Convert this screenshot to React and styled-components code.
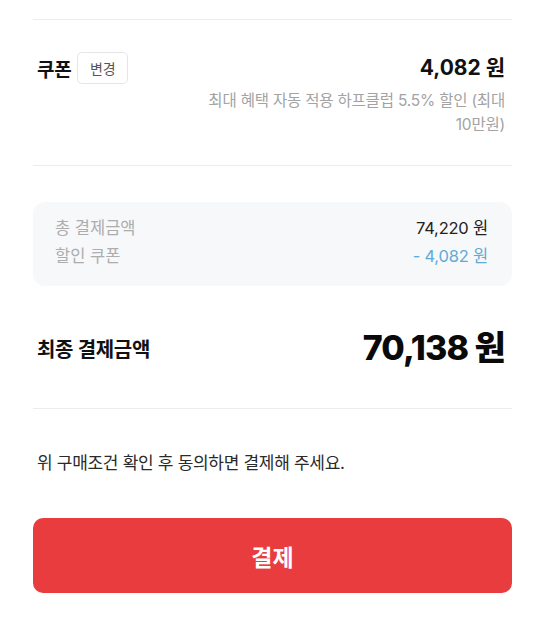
import styled, { createGlobalStyle } from "styled-components";

const GlobalStyle = createGlobalStyle`
  html, body {
    margin: 0;
    padding: 0;
    background: #fff;
  }
  body {
    font-family: "Inter", "Noto Sans CJK KR", sans-serif;
    color: #111;
    -webkit-font-smoothing: antialiased;
  }
  * {
    box-sizing: border-box;
  }
`;

const Page = styled.div`
  width: 545px;
  padding: 19px 33px 0;
`;

const Divider = styled.div`
  height: 1px;
  background: #ececec;
`;

const CouponSection = styled.div`
  display: flex;
  justify-content: space-between;
  align-items: flex-start;
  padding: 32px 7px 28px 4px;
`;

const CouponLeft = styled.div`
  display: flex;
  align-items: center;
  gap: 6px;
`;

const Label = styled.span`
  font-size: ${(p) => p.$size || 19}px;
  font-weight: 700;
  color: #111;
  letter-spacing: -0.3px;
`;

const ChangeBtn = styled.button`
  height: 32px;
  width: 51px;
  padding: 0;
  border: 1px solid #e6e6e6;
  border-radius: 5px;
  background: #fff;
  font-family: inherit;
  font-size: 14px;
  color: #555;
  cursor: pointer;
`;

const CouponRight = styled.div`
  display: flex;
  flex-direction: column;
  align-items: flex-end;
  text-align: right;
`;

const CouponAmount = styled.span`
  font-size: 21px;
  font-weight: 700;
  color: #111;
  line-height: 32px;
  margin-bottom: 5px;
`;

const CouponNote = styled.p`
  margin: 0;
  width: 320px;
  font-size: 15.5px;
  line-height: 24px;
  color: #a3a3a3;
  letter-spacing: -0.2px;
  word-break: keep-all;
`;

const SummaryBox = styled.div`
  margin-top: 36px;
  padding: 13px 24px 17px 22px;
  border-radius: 12px;
  background: #f7f8fa;
  display: flex;
  flex-direction: column;
  gap: 2px;
`;

const SummaryRow = styled.div`
  display: flex;
  justify-content: space-between;
  align-items: center;
  font-size: 16.5px;
  line-height: 26px;
`;

const SummaryLabel = styled.span`
  color: #adadad;
`;

const SummaryValue = styled.span`
  color: ${(p) => (p.$discount ? "#62aad6" : "#222")};
  letter-spacing: -0.2px;
`;

const FinalRow = styled.div`
  display: flex;
  justify-content: space-between;
  align-items: center;
  padding: 40px 7px 38px 4px;
`;

const FinalAmount = styled.span`
  font-size: 34px;
  font-weight: 800;
  color: #0a0a0a;
  letter-spacing: -0.9px;
  line-height: 44px;
`;

const Notice = styled.p`
  margin: 0;
  padding: 41px 4px 41px;
  font-size: 17px;
  line-height: 27px;
  color: #2a2a2a;
  letter-spacing: -0.3px;
`;

const PayButton = styled.button`
  width: 100%;
  height: 75px;
  border: none;
  border-radius: 10px;
  background: #e83c3f;
  color: #fff;
  font-family: inherit;
  font-size: 23px;
  font-weight: 700;
  cursor: pointer;
`;

export default function App() {
  return (
    <>
      <GlobalStyle />
      <Page>
        <Divider />
        <CouponSection>
          <CouponLeft>
            <Label>쿠폰</Label>
            <ChangeBtn>변경</ChangeBtn>
          </CouponLeft>
          <CouponRight>
            <CouponAmount>4,082 원</CouponAmount>
            <CouponNote>최대 혜택 자동 적용 하프클럽 5.5% 할인 (최대 10만원)</CouponNote>
          </CouponRight>
        </CouponSection>
        <Divider />
        <SummaryBox>
          <SummaryRow>
            <SummaryLabel>총 결제금액</SummaryLabel>
            <SummaryValue>74,220 원</SummaryValue>
          </SummaryRow>
          <SummaryRow>
            <SummaryLabel>할인 쿠폰</SummaryLabel>
            <SummaryValue $discount>- 4,082 원</SummaryValue>
          </SummaryRow>
        </SummaryBox>
        <FinalRow>
          <Label $size={20}>최종 결제금액</Label>
          <FinalAmount>70,138 원</FinalAmount>
        </FinalRow>
        <Divider />
        <Notice>위 구매조건 확인 후 동의하면 결제해 주세요.</Notice>
        <PayButton>결제</PayButton>
      </Page>
    </>
  );
}
